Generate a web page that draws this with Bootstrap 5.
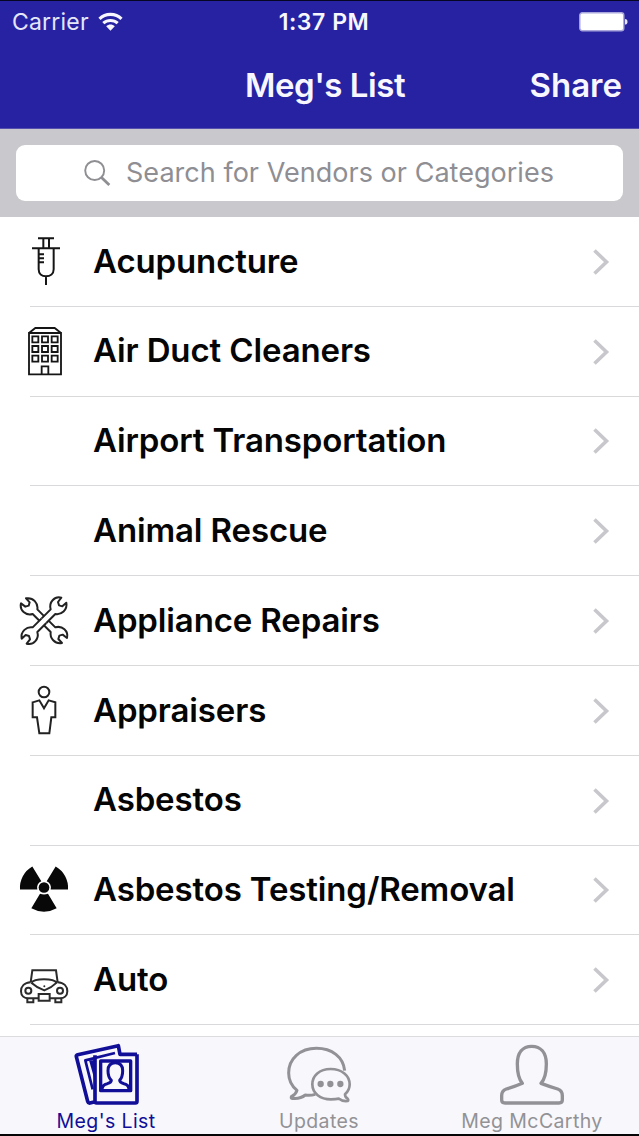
<!DOCTYPE html>
<html lang="en">
<head>
<meta charset="utf-8">
<meta name="viewport" content="width=device-width, initial-scale=1">
<title>Meg's List</title>
<link href="https://cdn.jsdelivr.net/npm/bootstrap@5.3.0/dist/css/bootstrap.min.css" rel="stylesheet">
<style>
body{font-family:Inter,"Liberation Sans",sans-serif;background:#fff;color:#050505;height:1136px;overflow:hidden}
svg{display:block;flex:none}
.app-head{background:#2622a2;height:129px;border-top:1px solid #050524;border-bottom:1px solid #5550ae;color:#f8f7ff}
.status{height:42px;padding:0 11px 0 12px;font-size:23px}
.side{flex:1 1 0}
.carrier{letter-spacing:.2px;color:#e6e6fb}
.clock{font-size:23px;font-weight:600;letter-spacing:.55px;margin-left:8px}
.titles{height:85px;font-size:33px;font-weight:600;padding:0 17px 0 28px}
.page-title{letter-spacing:-.45px}
.search-wrap{background:#c9c8cd;height:88px;padding:16px 16px 16px}
.search-box{background:#fff;border-radius:9px;height:56px;color:#8e8e93;font-size:27px;padding-left:67px}
.search-box span{margin-left:15px;letter-spacing:.03px}
.rows{height:819px;overflow:hidden}
.vendor{height:89.8px;padding-left:16px;flex:none;position:relative}
.vendor::after{content:"";position:absolute;left:30px;right:0;bottom:0;height:1px;background:#d9d9dc}
.ico{width:56px;height:56px}
.vname{font-size:33px;font-weight:600;letter-spacing:-.13px;margin-left:21px;line-height:1;padding-bottom:1.500px}
.chev{margin-right:29px}
.tabs{height:100px;background:#f8f7fb;border-top:1px solid #dcdbe0;border-bottom:2px solid #050505;color:#929296}
.tab{flex:1 1 0;padding-top:5px}
.tab div{font-size:19.5px;line-height:24px;letter-spacing:.4px;margin-top:1px;margin-right:1px}
.tab.on{color:#110f98}
</style>
</head>
<body class="d-flex flex-column">
<header class="app-head flex-shrink-0">
 <div class="status d-flex align-items-center">
  <div class="side d-flex align-items-center"><span class="carrier">Carrier</span>
   <svg width="26" height="20" viewBox="0 0 26 20" class="ms-2 me-0" fill="none" stroke="#f8f7ff" stroke-width="3.100"><path d="M2.500 6.800C8.500 .9 18.500 .9 24.500 6.800M6.300 11.200c4.100-3.700 10.300-3.700 14.400 0"/><path d="M9.200 14.200c2.500-2.300 6.100-2.300 8.600 0L13.500 18.800z" fill="#f8f7ff" stroke="none"/></svg>
  </div>
  <div class="clock">1:37 PM</div>
  <div class="side d-flex justify-content-end"><svg width="49" height="20" viewBox="0 0 49 20"><rect x=".8" y=".8" width="44" height="18" rx="2.500" fill="#fff" stroke="#a9a7dc" stroke-width="1.400"/><path d="M46 7q2.500 0 2.500 2.800T46 12.600z" fill="#e5e4fa"/></svg></div>
 </div>
 <div class="titles d-flex align-items-center">
  <div class="side"></div><div class="page-title">Meg's List</div><div class="side text-end">Share</div>
 </div>
</header>
<div class="search-wrap flex-shrink-0">
 <div class="search-box d-flex align-items-center">
  <svg width="28" height="28" viewBox="0 0 28 28" fill="none" stroke="#8e8e93"><circle cx="11.700" cy="11.500" r="9.500" stroke-width="1.900"/><path d="M18.500 18.500l7.800 7.500" stroke-width="2.800"/></svg>
  <span>Search for Vendors or Categories</span>
 </div>
</div>
<main class="rows d-flex flex-column flex-grow-1">
 <div class="vendor d-flex align-items-center"><div class="ico"><svg width="56" height="56" viewBox="18 27 168 168" fill="none" stroke="#151515" stroke-width="6"><path d="M84 40h48M100 40v29M117 40v29M66 70h84M86 70v63c0 13 9 21 22 21s23-8 23-21V70M108 154v26M88 88h14M88 100h14M88 112h14"/></svg></div><div class="vname">Acupuncture</div></div>
 <div class="vendor d-flex align-items-center"><div class="ico"><svg width="56" height="56" viewBox="18 296 168 168" fill="none" stroke="#151515" stroke-width="5.500"><path d="M57 323h96v124H57zM57 323l19-15h58l19 15M95 447v-24h20v24"/><path d="M67 333h18v18H67zM96 333h18v18H96zM125 333h18v18h-18zM67 362h18v18H67zM96 362h18v18H96zM125 362h18v18h-18zM67 391h18v18H67zM96 391h18v18H96zM125 391h18v18h-18z"/></svg></div><div class="vname">Air Duct Cleaners</div></div>
 <div class="vendor d-flex align-items-center"><div class="ico"></div><div class="vname">Airport Transportation</div></div>
 <div class="vendor d-flex align-items-center"><div class="ico"></div><div class="vname">Animal Rescue</div></div>
 <div class="vendor d-flex align-items-center"><div class="ico"><svg width="56" height="56" viewBox="18 24 168 168" fill="#fff" stroke="#222" stroke-width="6" stroke-linejoin="round"><defs><path id="arm" d="M7-7L-20-34C-17-52-32-71-54-67L-43-55L-46-45L-56-42L-69-52C-74-31-55-14-34-20L-7 7"/></defs><g transform="translate(102 107)"><use href="#arm"/><use href="#arm" transform="rotate(180)"/><use href="#arm" transform="rotate(90)"/><use href="#arm" transform="rotate(270)"/></g></svg></div><div class="vname">Appliance Repairs</div></div>
 <div class="vendor d-flex align-items-center"><div class="ico"><svg width="56" height="56" viewBox="18 294 168 168" fill="none" stroke="#222" stroke-width="6"><circle cx="102" cy="321" r="16"/><path d="M68 352l20-6 14 24 14-24 20 6v45h-12l-6 48H88l-7-48H68z"/></svg></div><div class="vname">Appraisers</div></div>
 <div class="vendor d-flex align-items-center"><div class="ico"></div><div class="vname">Asbestos</div></div>
 <div class="vendor d-flex align-items-center"><div class="ico"><svg width="56" height="56" viewBox="18 22.500 168 168" fill="#080808"><circle cx="102" cy="99" r="16"/><path d="M30 105A73 73 0 0 1 67 36L94 80A21 21 0 0 0 82 105zM174 105A73 73 0 0 0 137 36L110 80A21 21 0 0 1 122 105zM64 161Q102 182 140 161L114 118Q102 122 90 118z"/></svg></div><div class="vname">Asbestos Testing/Removal</div></div>
 <div class="vendor d-flex align-items-center"><div class="ico"><svg width="56" height="56" viewBox="18 292 168 168" fill="none" stroke="#2b2b2b" stroke-width="6"><path d="M62 383L67 347H138L143 383M64 384C73 370 131 370 140 384C130 394 117 402 103 407C89 402 75 394 64 384"/><path d="M62 383C42 384 33 396 33 410C33 424 43 431 55 431H85M143 383C163 384 172 396 172 410C172 424 162 431 150 431H119M86 418h33v20H86zM52 431v12h18v-12M136 431v12h18v-12"/><circle cx="55" cy="408" r="9"/><circle cx="150" cy="408" r="9"/><circle cx="103" cy="395" r="3" fill="#2b2b2b" stroke="none"/></svg></div><div class="vname">Auto</div></div>
</main>
<nav class="tabs d-flex flex-shrink-0 text-center">
 <div class="tab on d-flex flex-column align-items-center"><svg width="68" height="66" viewBox="99 36 204 198" fill="none" stroke="#110f98" stroke-width="11" stroke-linejoin="round"><path d="M291 73H240L235 47L113 74Q108 76 109 80L143 214Q145 220 150 219L165 215M165 76V214Q165 219 170 219H286Q291 219 291 214V73"/><path d="M225 69L136 91L158 178" stroke-width="8"/><path d="M147 91H164V150z" fill="#110f98" stroke="none"/><path d="M182 93h90v89h-90z" stroke-width="10"/><path d="M186 180Q186 164 202 161Q214 158 214 151Q204 141 204 122C204 104 213 98 226 98C240 98 248 106 248 122Q248 141 239 151Q239 158 252 161Q267 164 267 180" stroke-width="9"/></svg><div>Meg's List</div></div>
 <div class="tab d-flex flex-column align-items-center"><svg width="68" height="66" viewBox="78 36 204 198" fill="none" stroke="#929296" stroke-width="9" stroke-linejoin="round"><path d="M254 122C250 81 216 55 169 55C120 55 86 87 86 129C86 152 96 169 111 181Q107 194 94 200Q92 206 99 205Q121 207 136 195Q151 197 166 193"/><path d="M212 117C178 117 157 137 157 163C157 190 181 208 213 208Q227 208 237 206Q248 215 263 213Q267 211 262 205Q255 202 255 193Q269 181 269 163C269 137 246 117 212 117z" stroke-width="8"/><g fill="#929296" stroke="none"><circle cx="182" cy="162" r="9.500"/><circle cx="211" cy="162" r="9.500"/><circle cx="241" cy="162" r="9.500"/></g></svg><div>Updates</div></div>
 <div class="tab d-flex flex-column align-items-center"><svg width="68" height="66" viewBox="147 36 204 198" fill="none" stroke="#929296" stroke-width="10" stroke-linejoin="round"><path d="M217 160C207 148 202 127 202 102C202 68 218 49 245 49C272 49 289 68 289 102C289 127 284 148 273 160Q297 169 323 177Q337 182 337 197V210Q337 219 327 219H165Q155 219 155 210V197Q155 182 169 177Q197 169 217 160z"/></svg><div>Meg McCarthy</div></div>
</nav>
<script src="https://cdn.jsdelivr.net/npm/bootstrap@5.3.0/dist/js/bootstrap.bundle.min.js"></script>
<script>
// Every vendor row ends in the same disclosure chevron.
document.querySelectorAll('.vendor').forEach(function (row) {
  row.insertAdjacentHTML('beforeend', '<svg class="chev ms-auto" width="18" height="28" viewBox="0 0 18 28" fill="none" stroke="#c7c7cc" stroke-width="3.6"><path d="M2.500 2.500L14.500 14L2.500 25.500"/></svg>');
});
</script>
</body>
</html>
